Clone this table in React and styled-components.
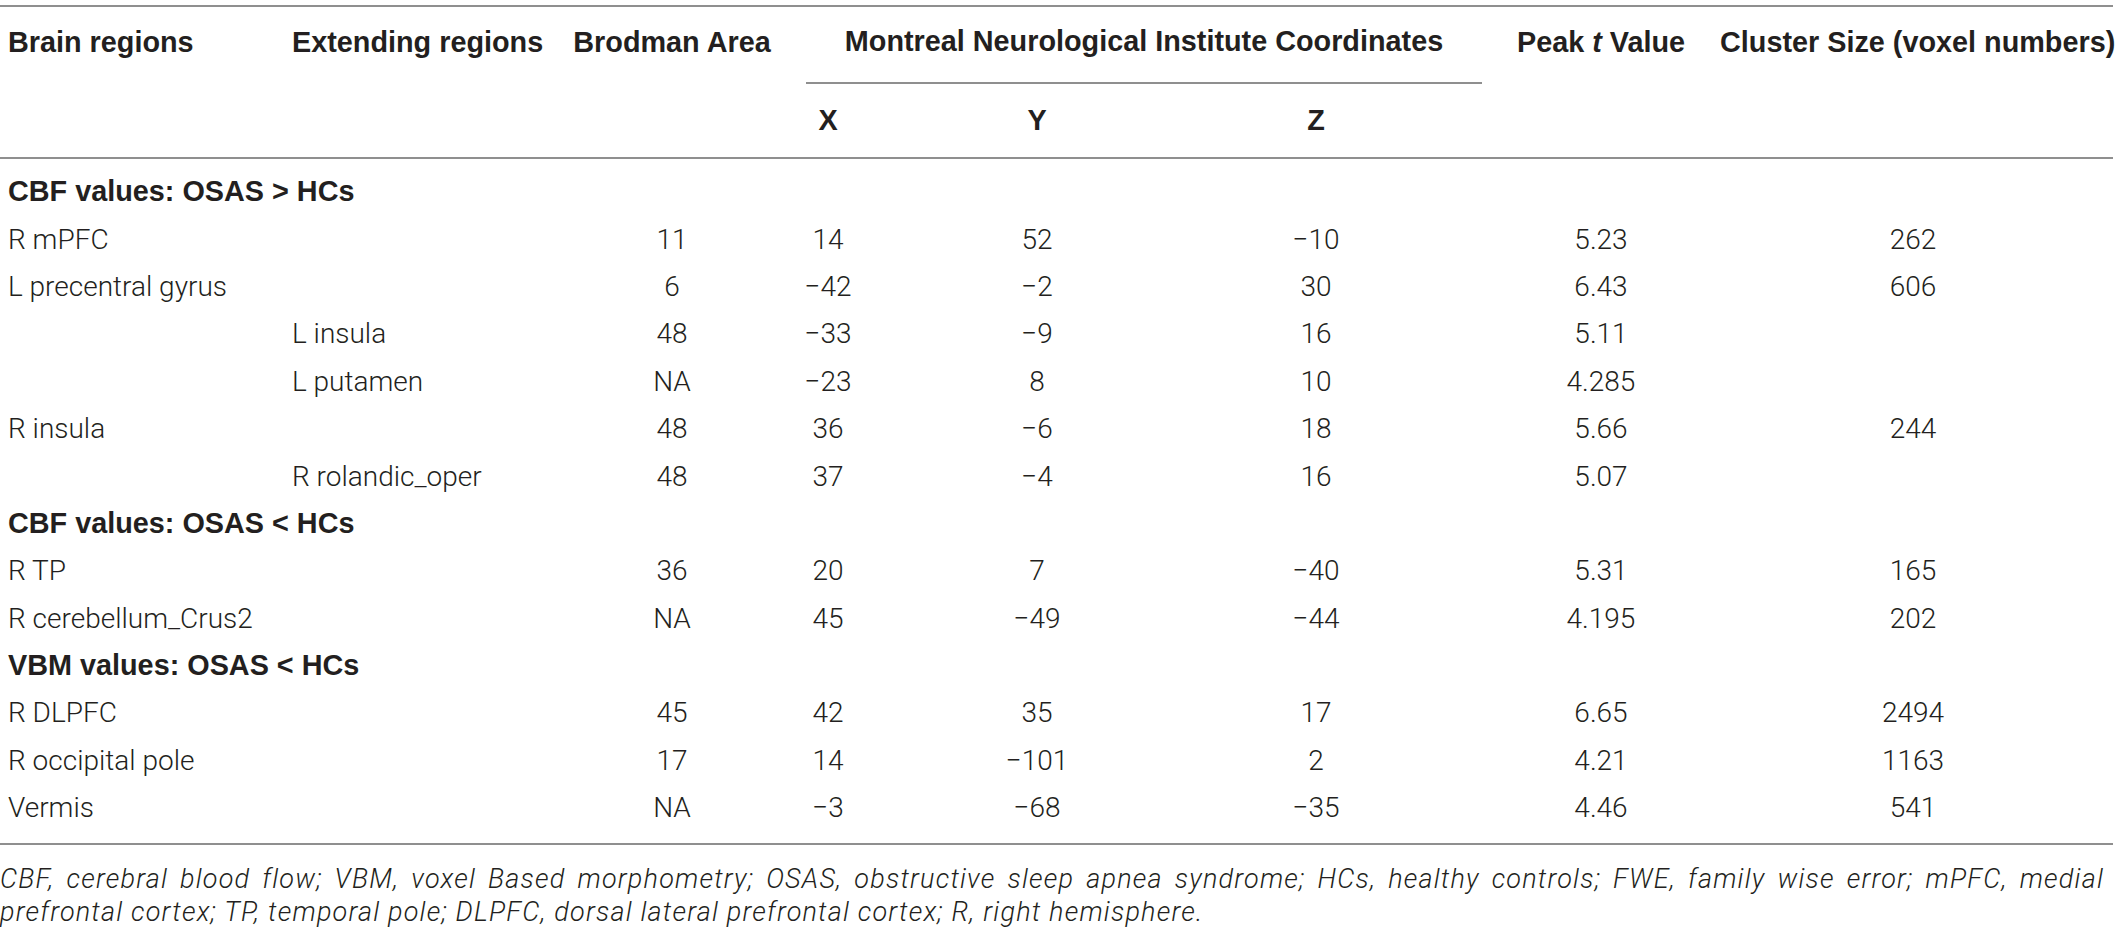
import React from 'react';
import styled, { createGlobalStyle } from 'styled-components';

const GlobalStyle = createGlobalStyle`
  body {
    margin: 0;
    background: #fff;
  }
`;

const COLUMNS = '284px 276px 246px 44px 374px 258px 238px 1fr';
const INK = '#231f20';
const RULE = '#8f8f8f';

// how each data column lines up its values
const columns = [
  { align: 'left' },
  { align: 'left' },
  { align: 'center', pr: 22 },
  { align: 'center' },
  { align: 'center' },
  { align: 'center', pr: 74 },
  { align: 'center' },
  { align: 'center', pr: 7 },
];

const sections = [
  {
    title: 'CBF values: OSAS > HCs',
    rows: [
      ['R mPFC', '', '11', '14', '52', '−10', '5.23', '262'],
      ['L precentral gyrus', '', '6', '−42', '−2', '30', '6.43', '606'],
      ['', 'L insula', '48', '−33', '−9', '16', '5.11', ''],
      ['', 'L putamen', 'NA', '−23', '8', '10', '4.285', ''],
      ['R insula', '', '48', '36', '−6', '18', '5.66', '244'],
      ['', 'R rolandic_oper', '48', '37', '−4', '16', '5.07', ''],
    ],
  },
  {
    title: 'CBF values: OSAS < HCs',
    rows: [
      ['R TP', '', '36', '20', '7', '−40', '5.31', '165'],
      ['R cerebellum_Crus2', '', 'NA', '45', '−49', '−44', '4.195', '202'],
    ],
  },
  {
    title: 'VBM values: OSAS < HCs',
    rows: [
      ['R DLPFC', '', '45', '42', '35', '17', '6.65', '2494'],
      ['R occipital pole', '', '17', '14', '−101', '2', '4.21', '1163'],
      ['Vermis', '', 'NA', '−3', '−68', '−35', '4.46', '541'],
    ],
  },
];

const App = () => {
  return (
    <>
      <GlobalStyle />
      <Page>
        <Head>
          <HeadCell $col="1" $row="1">Brain regions</HeadCell>
          <HeadCell $col="2" $row="1">Extending regions</HeadCell>
          <HeadCell $col="3" $row="1" $center $pr="22">Brodman Area</HeadCell>
          <GroupTitle>Montreal Neurological Institute Coordinates</GroupTitle>
          <HeadCell $col="7" $row="1" $center>
            Peak&nbsp;<em>t</em>&nbsp;Value
          </HeadCell>
          <HeadCell $col="8" $row="1" $center $pr="7">Cluster Size (voxel numbers)</HeadCell>
          <SubHead $col="4">X</SubHead>
          <SubHead $col="5">Y</SubHead>
          <SubHead $col="6" $pr="74">Z</SubHead>
        </Head>
        <Body>
          {sections.map((section) => (
            <React.Fragment key={section.title}>
              <SectionTitle>{section.title}</SectionTitle>
              {section.rows.map((row, idx) =>
                row.map((value, i) => (
                  <Cell key={section.title + idx + '-' + i} $align={columns[i].align} $pr={columns[i].pr}>
                    {value}
                  </Cell>
                ))
              )}
            </React.Fragment>
          ))}
        </Body>
        <Notes>
          <NoteLine $justify>
            CBF, cerebral blood flow; VBM, voxel Based morphometry; OSAS, obstructive sleep apnea syndrome; HCs, healthy controls; FWE, family wise error; mPFC, medial
          </NoteLine>
          <NoteLine>
            prefrontal cortex; TP, temporal pole; DLPFC, dorsal lateral prefrontal cortex; R, right hemisphere.
          </NoteLine>
        </Notes>
      </Page>
    </>
  );
};

export default App;

const Page = styled.div`
  width: 2113px;
  padding-top: 5px;
  color: ${INK};
`;

const Grid = styled.div`
  display: grid;
  grid-template-columns: ${COLUMNS};
`;

const Head = styled(Grid)`
  border-top: 2px solid ${RULE};
  border-bottom: 2px solid ${RULE};
  grid-template-rows: 77px 73px;
  font-family: "Liberation Sans", Arial, sans-serif;
  font-weight: 700;
  font-size: 28.8px;
`;

const HeadCell = styled.div`
  grid-column: ${(p) => p.$col};
  grid-row: ${(p) => p.$row};
  display: flex;
  align-items: center;
  justify-content: ${(p) => (p.$center ? 'center' : 'flex-start')};
  padding: 0 ${(p) => p.$pr || 0}px 6px ${(p) => (p.$center ? 0 : 8)}px;
  white-space: nowrap;

  em {
    font-style: italic;
  }
`;

const GroupTitle = styled.div`
  grid-column: 4 / 7;
  grid-row: 1;
  display: flex;
  align-items: center;
  justify-content: center;
  padding-bottom: 6px;
  border-bottom: 2px solid ${RULE};
  white-space: nowrap;
`;

const SubHead = styled.div`
  grid-column: ${(p) => p.$col};
  grid-row: 2;
  display: flex;
  align-items: center;
  justify-content: center;
  padding-right: ${(p) => p.$pr || 0}px;
`;

const Body = styled(Grid)`
  grid-auto-rows: 47.4px;
  align-items: center;
  padding: 9px 0 12px;
  border-bottom: 2px solid ${RULE};
  font-family: Roboto, "Liberation Sans", sans-serif;
  font-weight: 300;
  font-size: 28px;
`;

const SectionTitle = styled.div`
  grid-column: 1 / -1;
  padding-left: 8px;
  font-family: "Liberation Sans", Arial, sans-serif;
  font-weight: 700;
  font-size: 28.8px;
`;

const Cell = styled.div`
  display: flex;
  justify-content: ${(p) => (p.$align === 'left' ? 'flex-start' : 'center')};
  padding-left: ${(p) => (p.$align === 'left' ? 8 : 0)}px;
  padding-right: ${(p) => p.$pr || 0}px;
  white-space: nowrap;
`;

const Notes = styled.div`
  padding: 18px 9px 0 0;
  font-family: Roboto, "Liberation Sans", sans-serif;
  font-weight: 300;
  font-style: italic;
  font-size: 27px;
  letter-spacing: 1.2px;
  line-height: 33px;
`;

const NoteLine = styled.div`
  white-space: nowrap;
  text-align: left;
  ${(p) => p.$justify && `
    white-space: normal;
    text-align: justify;
    text-align-last: justify;
  `}
`;
